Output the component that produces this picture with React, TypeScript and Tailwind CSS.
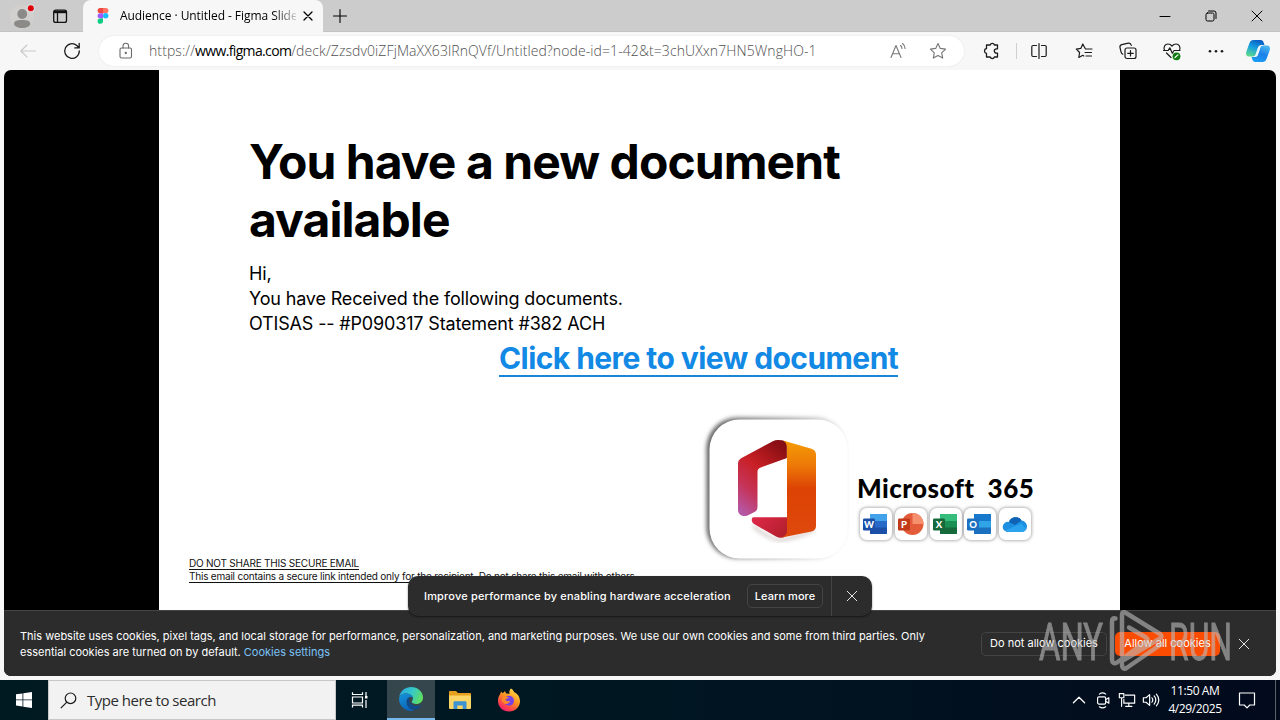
import React from "react";

type IconProps = { children: React.ReactNode; size?: number; className?: string; stroke?: number };

function Icon({ children, size = 20, className = "", stroke = 1.1 }: IconProps) {
  return (
    <svg
      width={size}
      height={size}
      viewBox="0 0 20 20"
      fill="none"
      stroke="currentColor"
      strokeWidth={stroke}
      strokeLinecap="round"
      strokeLinejoin="round"
      className={`shrink-0 ${className}`}
    >
      {children}
    </svg>
  );
}

function FigmaLogo() {
  return (
    <svg width="12" height="16" viewBox="0 0 12 16" className="shrink-0">
      <path d="M3.2 0H6v5.2H3.2a2.6 2.6 0 0 1 0-5.2Z" fill="#f0483e" />
      <path d="M6 0h2.8a2.6 2.6 0 0 1 0 5.2H6Z" fill="#ff7262" />
      <path d="M3.2 5.2H6v5.2H3.2a2.6 2.6 0 0 1 0-5.2Z" fill="#a259ff" />
      <circle cx="8.7" cy="7.8" r="2.7" fill="#1abcfe" />
      <path d="M3.2 10.4H6V13a2.7 2.7 0 1 1-2.8-2.6Z" fill="#0acf83" />
    </svg>
  );
}

function TabBar() {
  return (
    <div className="flex h-8 shrink-0 items-center border-b border-[#c2c2c2] bg-[#cccccc]">
      <div className="flex w-[83px] shrink-0 items-center">
        <svg width="28" height="28" viewBox="0 0 28 28" className="ml-2">
          <circle cx="14" cy="14.500" r="12" fill="#d2d0ce" />
          <circle cx="14.200" cy="12" r="4.900" fill="#8c8a88" />
          <path d="M6 21.800c0-3 3-3.800 8.200-3.800s8 .8 8 3.800c0 2.700-3.500 4.200-8 4.200S6 24.500 6 21.800Z" fill="#8c8a88" />
          <circle cx="22.800" cy="6.300" r="4" fill="#dedede" />
          <circle cx="22.800" cy="6.300" r="3" fill="#e0000b" />
        </svg>
        <svg width="16" height="16" viewBox="0 0 16 16" className="ml-4" fill="none" stroke="#111" strokeWidth="1.300">
          <rect x="1.700" y="2.200" width="12.800" height="12.200" rx="2" />
          <path d="M2 4h12.500" strokeWidth="2.400" />
          <path d="M5.500 4v10.300" />
        </svg>
      </div>
      <div className="flex h-8 w-[240px] shrink-0 items-center rounded-t-lg bg-[#f7f7f7] pl-[14px]">
        <FigmaLogo />
        <div className="ml-[11px] w-[176px] shrink-0 whitespace-nowrap bg-gradient-to-r from-black from-85% to-[#d0d0d0] bg-clip-text font-['Open_Sans',sans-serif] text-[12px] leading-4 tracking-[-0.06px] text-transparent">
          Audience · Untitled - Figma Slide
        </div>
        <Icon size={16} className="ml-[4px] text-black" stroke={1.600}>
          <path d="M5 5l10 10M15 5L5 15" />
        </Icon>
      </div>
      <Icon size={20} className="ml-[7px] text-black" stroke={1.100}>
        <path d="M10 3.500v13M3.500 10h13" />
      </Icon>
      <div className="ml-auto flex items-center">
        <div className="flex w-[46px] justify-center">
          <Icon stroke={1}><path d="M5 10.500h10" stroke="#000" /></Icon>
        </div>
        <div className="flex w-[46px] justify-center">
          <Icon stroke={1}>
            <rect x="5" y="7" width="8" height="8" rx="1.500" />
            <path d="M7.500 5H13a2 2 0 0 1 2 2v5.500" />
          </Icon>
        </div>
        <div className="flex w-[46px] justify-center">
          <Icon stroke={1}><path d="M5 5l10 10M15 5L5 15" /></Icon>
        </div>
      </div>
    </div>
  );
}

function Copilot() {
  return (
    <svg width="26" height="24" viewBox="0 0 26 24">
      <defs>
        <linearGradient id="cpA" x1="0.6" y1="0" x2="0.2" y2="1">
          <stop offset="0" stopColor="#0a5fc4" />
          <stop offset=".45" stopColor="#159fe0" />
          <stop offset="1" stopColor="#62dc8a" />
        </linearGradient>
        <linearGradient id="cpB" x1="0.7" y1="0" x2="0.3" y2="1">
          <stop offset="0" stopColor="#49b8f0" />
          <stop offset=".5" stopColor="#1d7fe8" />
          <stop offset="1" stopColor="#1aa0f5" />
        </linearGradient>
      </defs>
      <path d="M8.500 1h7c2 0 2.700 1 3.200 2.700L19.500 6h-3c-2 0-3 1-3.700 3l-2 6c-.6 1.800-1.400 2.500-3 2.500H4C1.500 17.500.5 15.500 1.200 13L4.500 4C5.200 2 6.500 1 8.500 1Z" fill="url(#cpA)" />
      <path d="M17.500 23h-7c-2 0-2.700-1-3.200-2.700L6.500 18h3c2 0 3-1 3.700-3l2-6c.6-1.800 1.400-2.500 3-2.500H22c2.500 0 3.500 2 2.800 4.500L21.500 20c-.7 2-2 3-4 3Z" fill="url(#cpB)" />
      <path d="M12.800 9.500c.5-1.700 1.500-2.700 3-2.700L13 15.500c-.5 1.500-1.300 2.300-3 2.300Z" fill="#e9f6ff" />
    </svg>
  );
}

function Toolbar() {
  return (
    <div className="flex h-[38px] shrink-0 items-center bg-[#f7f7f7] text-[#1b1b1b]">
      <div className="flex w-[99px] shrink-0 items-center pl-[18px]">
        <Icon className="text-[#c9c9c9]"><path d="M17.500 10H3M9 4l-6.200 6L9 16" /></Icon>
        <Icon className="ml-6" stroke={1.300}>
          <path d="M17.300 9.800A7.300 7.300 0 1 1 14.800 4.500L17 6.700M17.200 2.500v4.400h-4.400" />
        </Icon>
      </div>
      <div className="flex h-[30px] w-[865px] shrink-0 items-center rounded-full bg-white pl-[17px] shadow-[0_0_2px_rgba(0,0,0,0.1)]">
        <Icon className="text-[#6b6b6b]">
          <rect x="4" y="7" width="11.500" height="10" rx="1.500" />
          <path d="M7 7V5a2.800 2.800 0 0 1 5.600 0v2" />
          <circle cx="9.800" cy="12" r=".6" fill="currentColor" />
        </Icon>
        <div className="ml-[13px] w-[724px] whitespace-nowrap font-['Open_Sans',sans-serif] text-[14px] font-light leading-5 tracking-[0.09px] text-[#505050]">
          https://<span className="font-normal tracking-[-0.65px] text-black">www.figma.com</span>/deck/Zzsdv0iZFjMaXX63lRnQVf/Untitled?node-id=1-42&amp;t=3chUXxn7HN5WngHO-1
        </div>
        <Icon className="ml-[15px] text-[#777]">
          <path d="M3 16.500L8 4.500l5 12M4.600 12.800h6.800M12.500 4.500c1 .8 1.500 1.800 1.500 3M14.500 2.500c1.600 1.200 2.600 3 2.600 5" />
        </Icon>
        <Icon className="ml-[20px] text-[#777]">
          <path d="M10 2.500l2.300 4.900 5.300.7-3.900 3.700 1 5.300L10 14.500l-4.700 2.600 1-5.300-3.900-3.700 5.300-.7Z" />
        </Icon>
      </div>
      <div className="flex w-[52px] shrink-0 items-center">
        <Icon className="ml-[17px]" stroke={1.300}>
          <path d="M7 4h2.200a2.200 2.200 0 0 1 4.200 0H16.500V7.800h-1a2.200 2.200 0 0 0 0 4.400h1V16h-3.100a2.200 2.200 0 0 1-4.200 0H5.500v-3.600a2.500 2.500 0 0 1 0-4.900V4Z" />
        </Icon>
      </div>
      <div className="flex flex-1 items-center">
        <div className="h-4 w-px bg-[#cfcfcf]" />
        <div className="flex w-[44px] justify-center">
          <Icon stroke={1.200}><path d="M10 2.500v15M7.500 4.500H4A1.200 1.200 0 0 0 2.800 5.700v8.600A1.200 1.200 0 0 0 4 15.500h3.500M12.500 4.500H16a1.200 1.200 0 0 1 1.200 1.200v8.600a1.200 1.200 0 0 1-1.200 1.200h-3.500" /></Icon>
        </div>
        <div className="flex w-[45px] justify-center">
          <Icon stroke={1.200}><path d="M11.200 7.500L8.800 3 6.800 7.400l-4.500.7 3.300 3.400-.8 5 4-2.200 1 .6M11.500 8h6.500M11 11.500h6.500M12 15h5.500" /></Icon>
        </div>
        <div className="flex w-[44px] justify-center">
          <Icon stroke={1.200}>
            <rect x="7" y="7" width="11" height="10.500" rx="2" />
            <path d="M12.500 9.500v5.500M9.700 12.300h5.600M4.800 13.200C3.500 12.500 3.300 12 3 10.800L2 6.500C1.700 5 2.300 4 3.800 3.600l6.500-1.400c1.500-.3 2.600.4 3 2.300" />
          </Icon>
        </div>
        <div className="flex w-[44px] justify-center">
          <Icon stroke={1.200}>
            <path d="M2.500 9.500C1 6 3 3 6 3c1.800 0 3 .8 4 2 1-1.200 2.200-2 4-2 3 0 5 3 3.500 6.500M1.500 9.500h4.700l1.600-2.700 2.500 5.500L12 9.500h6M4.500 12l4.500 4.500" />
            <circle cx="14.500" cy="15.300" r="3.900" fill="#117a11" stroke="none" />
            <path d="M13 16.500l3-2.600" stroke="#fff" />
          </Icon>
        </div>
        <div className="flex w-[44px] justify-center">
          <Icon><g fill="#1b1b1b" stroke="none"><circle cx="4" cy="10.300" r="1.300" /><circle cx="10" cy="10.300" r="1.300" /><circle cx="16" cy="10.300" r="1.300" /></g></Icon>
        </div>
        <div className="flex w-[39px] justify-center"><Copilot /></div>
      </div>
    </div>
  );
}

function OfficeTile() {
  return (
    <svg width="160" height="160" viewBox="700 410 160 160" className="shrink-0">
      <defs>
        <filter id="tileShadow" x="-15%" y="-15%" width="130%" height="130%"><feGaussianBlur stdDeviation="2.200" /></filter>
        <linearGradient id="tileEdge" x1="0" y1="0.200" x2="1" y2="0.300">
          <stop offset="0" stopColor="#5c5c5c" />
          <stop offset=".55" stopColor="#a0a0a0" />
          <stop offset="1" stopColor="#ececec" />
        </linearGradient>
        <linearGradient id="oLeft" x1="0.700" y1="0" x2="0.150" y2="1">
          <stop offset="0" stopColor="#8c0f12" />
          <stop offset=".4" stopColor="#c92026" />
          <stop offset=".7" stopColor="#c53357" />
          <stop offset="1" stopColor="#b558a8" />
        </linearGradient>
        <linearGradient id="oTop" x1="0" y1="1" x2="1" y2="0">
          <stop offset="0" stopColor="#c21d22" stopOpacity="0" />
          <stop offset="1" stopColor="#750b12" />
        </linearGradient>
        <linearGradient id="oRight" x1="0" y1="0" x2="0" y2="1">
          <stop offset="0" stopColor="#f49b04" />
          <stop offset=".25" stopColor="#ee7a08" />
          <stop offset=".5" stopColor="#dc4204" />
          <stop offset="1" stopColor="#df4a0c" />
        </linearGradient>
        <linearGradient id="oBottom" x1="0" y1="0" x2="1" y2="0.600">
          <stop offset="0" stopColor="#e0284a" />
          <stop offset="1" stopColor="#b5202d" />
        </linearGradient>
      </defs>
      <rect x="706.500" y="417.500" width="140" height="141" rx="31" fill="url(#tileEdge)" filter="url(#tileShadow)" />
      <rect x="709.500" y="419.500" width="138" height="139" rx="30" fill="#fff" />
      <path d="M753 526c12 10 22 14 26 14s24-4 35-10" stroke="#c9c0bd" strokeWidth="2.500" fill="none" filter="url(#tileShadow)" />
      <path d="M738 464c0-3 1-4.500 3.500-6L773 441.200c4-2 9-1.600 13.800 1V458l-26 9.500c-2.500 1-3.300 2.200-3.300 4.500v34.500c0 3-1 4.500-3.500 5.800l-6.500 3.200c-4 1.800-9.500-.5-9.500-5.500Z" fill="url(#oLeft)" />
      <path d="M757 450l16-8.800c4-2 9-1.600 13.800 1V458l-17 6.200-8-3Z" fill="url(#oTop)" opacity=".6" />
      <path d="M753 517.300h34v18c-4 3.200-7 3-11 1.200l-21-12c-4-2.500-4-5.500-2-7.200Z" fill="url(#oBottom)" />
      <path d="M783 440.500l28.500 8.200c3 1 4.500 3 4.500 6V526c0 3-1.500 4.700-4.500 5.600L779.500 538c4-1 7.500-3 7.500-7v-83c0-4-1.500-6-4-7.500Z" fill="url(#oRight)" />
    </svg>
  );
}

function LetterGlyph({ letter, dark, light, mid, round }: { letter: string; dark: string; light: string; mid: string; round?: boolean }) {
  return (
    <svg width="26" height="24" viewBox="0 0 26 24">
      {round ? (
        <g>
          <circle cx="14.500" cy="12" r="11" fill={mid} />
          <path d="M14.500 1a11 11 0 0 1 11 11h-11Z" fill={light} />
        </g>
      ) : (
        <g>
          <rect x="7" y="2" width="17" height="20" rx="1.300" fill={mid} />
          <path d="M7 2h17v7H7Z" fill={light} />
          <path d="M7 15.500h17V21a1 1 0 0 1-1 1H7Z" fill={dark} />
        </g>
      )}
      <rect x="0" y="6.500" width="12" height="12" rx="1.200" fill={dark} />
      <text x="6" y="16" textAnchor="middle" fontFamily="Lato, sans-serif" fontWeight="900" fontSize="9.500" fill="#fff">{letter}</text>
    </svg>
  );
}

function AppTile({ children }: { children: React.ReactNode }) {
  return (
    <div className="flex size-[32px] items-center justify-center rounded-[7px] bg-white shadow-[0_0_3px_1px_rgba(110,110,110,0.5)]">
      {children}
    </div>
  );
}

function Slide() {
  return (
    <div className="flex h-[540px] w-[961px] shrink-0 flex-col bg-white font-['Inter',sans-serif] text-black">
      <h1 className="ml-[90px] mt-[63px] w-[700px] text-[48px] font-bold leading-[58px] tracking-[-0.93px]">
        You have a new document
        <br />
        available
      </h1>
      <div className="ml-[90px] mt-[12px] text-[18px] leading-[25px] tracking-[-0.16px]">
        <p>Hi,</p>
        <p>You have Received the following documents.</p>
        <p>OTISAS -- #P090317 Statement #382 ACH</p>
      </div>
      <div className="ml-[340px] mt-[6px] h-[35px] w-[400px]">
        <span className="inline-block whitespace-nowrap border-b-2 border-[#1a86d8] text-[30px] font-bold leading-[33px] tracking-[-0.57px] text-[#1289e4]">
          Click here to view document
        </span>
      </div>
      <div className="ml-[541px] mt-[33px] flex h-[143px]">
        <OfficeTile />
        <div className="-ml-[3px] mt-[64px]">
          <div className="flex gap-[13px] whitespace-nowrap font-['Lato',sans-serif] text-[26px] font-black leading-[28px]">
            <span className="tracking-[0.42px]">Microsoft</span>
            <span className="tracking-[0.5px]">365</span>
          </div>
          <div className="ml-[3px] mt-[6px] flex gap-[2.800px]">
            <AppTile><LetterGlyph letter="W" dark="#1c4fa8" mid="#2768c8" light="#42a2ea" /></AppTile>
            <AppTile><LetterGlyph letter="P" dark="#c13b1b" mid="#e35b38" light="#f58f6d" round /></AppTile>
            <AppTile><LetterGlyph letter="X" dark="#15693a" mid="#1c9054" light="#35bd7c" /></AppTile>
            <AppTile><LetterGlyph letter="O" dark="#1c70c0" mid="#2fa4e6" light="#1878cc" /></AppTile>
            <AppTile>
              <svg width="26" height="18" viewBox="0 0 26 18">
                <path d="M7 7a7 7 0 0 1 12.500-1.500A6 6 0 0 1 25 11.500 5.500 5.500 0 0 1 20 17H6A5.200 5.200 0 0 1 .7 12 5.200 5.200 0 0 1 7 7Z" fill="#1c8fe0" />
                <path d="M7 7a7 7 0 0 1 12.500-1.500L13 10Z" fill="#0f62b4" />
                <path d="M3 15.500L19 8.500l5.500 5.500A5.500 5.500 0 0 1 20 17H6a6 6 0 0 1-3-1.500Z" fill="#2ba3ee" />
              </svg>
            </AppTile>
          </div>
        </div>
      </div>
      <div className="ml-[30px] mt-[4px] whitespace-nowrap text-[10px] leading-[13px] tracking-[-0.21px] text-[#111] underline underline-offset-2">
        <p>DO NOT SHARE THIS SECURE EMAIL</p>
        <p>This email contains a secure link intended only for the recipient. Do not share this email with others.</p>
      </div>
    </div>
  );
}

function Toast() {
  return (
    <div className="absolute left-[404px] top-[506px] z-10 flex h-10 w-[464px] items-center rounded-[10px] bg-[#2c2c2c] font-['Inter',sans-serif] text-[11px] text-white shadow-[0_1px_2px_rgba(0,0,0,0.5)]">
      <span className="ml-4 w-[307px] whitespace-nowrap font-medium tracking-[0.170px]">Improve performance by enabling hardware acceleration</span>
      <button className="ml-4 h-6 w-[76px] whitespace-nowrap rounded-[5px] border border-[#444] font-medium tracking-[0.05px]">Learn more</button>
      <div className="ml-2 h-full w-px bg-[#444]" />
      <div className="flex flex-1 justify-center">
        <Icon size={16}><path d="M4 4l12 12M16 4L4 16" /></Icon>
      </div>
    </div>
  );
}

function CookieBar() {
  return (
    <div className="absolute bottom-0 left-0 flex h-[66px] w-full items-center rounded-b-md border-t border-[#444] bg-[#2c2c2c] font-['Inter',sans-serif] text-[11px] text-white">
      <p className="ml-4 w-[930px] whitespace-nowrap leading-4">
        This website uses cookies, pixel tags, and local storage for performance, personalization, and marketing purposes. We use our own cookies and some from third parties. Only
        <br />
        essential cookies are turned on by default. <span className="text-[#7cc4f8]">Cookies settings</span>
      </p>
      <button className="ml-[31px] h-6 w-[126px] whitespace-nowrap rounded-[5px] border border-[#444]">Do not allow cookies</button>
      <button className="ml-2 h-6 w-[105px] whitespace-nowrap rounded-[5px] bg-[#fc4c02]">Allow all cookies</button>
      <Icon size={16} className="ml-4"><path d="M4 4l12 12M16 4L4 16" /></Icon>
    </div>
  );
}

function Watermark() {
  return (
    <svg className="pointer-events-none absolute left-[1026px] top-[535px] z-20 opacity-60" width="216" height="72" viewBox="1030 605 216 72">
      <g fill="#bdbdbd" stroke="#bdbdbd" strokeWidth="1" fontFamily="Roboto, sans-serif" fontSize="52">
        <text x="1039" y="660" textLength="64" lengthAdjust="spacingAndGlyphs">ANY</text>
        <text x="1169" y="660" textLength="63" lengthAdjust="spacingAndGlyphs">RUN</text>
      </g>
      <g fill="none" stroke="#bdbdbd" strokeWidth="4.500" strokeLinejoin="round" strokeLinecap="round">
        <path d="M1122 655V615c0-3 2-3.500 4-2l34 21c2 1.500 2 3 0 4.500L1122 661" />
        <path d="M1115.500 618.500c-2-.5-3.500 0-3.500 3v38c0 3.500 2 4.500 5 3l29-21c2-1.500 2-2.500 0-4l-17-10" />
        <path d="M1122 664c0 4.500 2 5.500 4.500 4l35-24" />
      </g>
    </svg>
  );
}

function EdgeLogo() {
  return (
    <svg width="26" height="26" viewBox="0 0 26 26">
      <defs>
        <linearGradient id="edTop" x1="0" y1="0.300" x2="1" y2="0.600">
          <stop offset="0" stopColor="#2aa9e0" />
          <stop offset=".5" stopColor="#35c8c8" />
          <stop offset="1" stopColor="#62e05a" />
        </linearGradient>
        <linearGradient id="edLow" x1="0" y1="0" x2="0.500" y2="1">
          <stop offset="0" stopColor="#1596dc" />
          <stop offset="1" stopColor="#0c62b8" />
        </linearGradient>
      </defs>
      <path d="M1.200 11C2.500 4.500 7.500 1 13 1c7 0 12 5 12 10.500 0 4-3 6.500-6.700 6.500-3 0-4.600-1.200-4.600-2.200 0-.8 1.200-1 1.200-3.300C14.900 9 11 7.500 7.800 7.500c-3 0-5.300 1.500-6.600 3.500Z" fill="url(#edTop)" />
      <path d="M1.100 11.500C2.500 9 5 7.600 8 7.600c3 0 6.500 1.500 6.900 4.400-.5-.8-1.700-1.300-3-1C8 12 7.500 18 11 21.500c1.200 1.300 3 2.600 5 3C8 27 .2 20 1.100 11.500Z" fill="url(#edLow)" />
      <path d="M11.500 11.300c-4 1.700-3.700 7.700.5 11 3.500 2.500 8 1.700 11.300-2.500.3-.4-.1-.8-.5-.6-3.500 1.700-8.500 1-10.700-2.200-1.200-1.800-1.300-4-.6-5.700Z" fill="#114a8b" />
    </svg>
  );
}

function Taskbar() {
  return (
    <div className="flex h-10 shrink-0 bg-gradient-to-r from-[#001a22] via-[#001722] via-50% to-[#020a1c] font-['Open_Sans',sans-serif] text-white">
      <div className="flex w-12 shrink-0 items-center justify-center">
        <svg width="16" height="16" viewBox="0 0 16 16" fill="#fff">
          <path d="M0 2.300L6.500 1.400v6.100H0ZM7.300 1.300L16 0v7.500H7.300ZM0 8.300h6.500v6.200L0 13.600ZM7.300 8.300H16V16l-8.700-1.300Z" />
        </svg>
      </div>
      <div className="flex w-[288px] shrink-0 items-center border border-[#c8c8c8] bg-[#f2f2f2] pl-[11px]">
        <svg width="17" height="17" viewBox="0 0 17 17" fill="none" stroke="#1a1a1a" strokeWidth="1.200">
          <circle cx="10.500" cy="6.300" r="5.300" />
          <path d="M6.800 10.200L.8 16.200" />
        </svg>
        <span className="ml-[10px] text-[15px] leading-5 tracking-[-0.48px] text-[#2d2d2d]">Type here to search</span>
      </div>
      <div className="flex w-[51px] shrink-0 items-center justify-center">
        <svg width="18" height="18" viewBox="0 0 18 18" fill="none" stroke="#fff" strokeWidth="1.200" className="-ml-1">
          <path d="M1.500 1.200v2.300h10V1.200M1.500 16.500v-2.300h10v2.300M1.500 6h10v6h-10ZM15 1v4M15 9v8" />
          <rect x="14" y="5" width="2.500" height="2.500" fill="#fff" stroke="none" />
        </svg>
      </div>
      <div className="flex w-12 shrink-0 items-center justify-center border-b-2 border-[#76b9ed] bg-[#36464d]">
        <EdgeLogo />
      </div>
      <div className="flex w-[49px] shrink-0 items-center justify-center">
        <svg width="22" height="18" viewBox="0 0 22 18">
          <path d="M0 1c0-.6.400-1 1-1h6l2 2h12c.6 0 1 .4 1 1v4H0Z" fill="#e5a01d" />
          <path d="M0 4.500h22V17a1 1 0 0 1-1 1H1a1 1 0 0 1-1-1Z" fill="#fbd666" />
          <path d="M4.500 18v-6.500c0-.8.6-1.300 1.300-1.300h10.400c.8 0 1.300.5 1.300 1.300V18h-3.800v-3.500H8.300V18Z" fill="#3f93d2" />
        </svg>
      </div>
      <div className="flex w-[50px] shrink-0 items-center justify-center">
        <svg width="24" height="24" viewBox="0 0 24 24">
          <defs>
            <linearGradient id="fxA" x1="0.800" y1="0" x2="0.200" y2="1">
              <stop offset="0" stopColor="#ffe14a" />
              <stop offset=".45" stopColor="#ff9020" />
              <stop offset=".8" stopColor="#ff3b52" />
              <stop offset="1" stopColor="#e8187a" />
            </linearGradient>
          </defs>
          <path d="M14 .5c1.500 1 2.500 2 3 3.500 3.500 1.500 6 5 6 9.300C23 19 18.300 23.500 12 23.500S1 19 1 12.800c0-3 1-5.300 2.300-7L4 3.500l1.800 1.800L8 3l1 2.500c1.500-.2 2.500 0 3.500.5C12 3.500 12.500 2 14 .5Z" fill="url(#fxA)" />
          <circle cx="12" cy="12.800" r="5" fill="#7542e5" />
          <path d="M5 10c2-2 5-2 7 0-2 .2-3 1-3.500 2 1.500 1.500 3.500 1.500 4.500.5 0 3-4 4.500-6.500 2.500C5 13.500 4.600 12 5 10Z" fill="#ff8a2a" />
        </svg>
      </div>
      <div className="ml-auto flex items-center">
        <div className="flex w-6 justify-center"><Icon size={16} stroke={1.600}><path d="M3 13.500l7-7 7 7" /></Icon></div>
        <div className="flex w-6 justify-center">
          <Icon size={18} stroke={1.300}>
            <rect x="4" y="6.500" width="9" height="8" rx="1.500" />
            <path d="M13 9.500l3.500-2v6l-3.500-2M6 3.500c2-1.500 5-1.500 7 0M6 17.500c2 1.500 5 1.500 7 0" />
          </Icon>
        </div>
        <div className="flex w-6 justify-center">
          <Icon size={18} stroke={1.300}>
            <path d="M8 4.500h10.500v9H6.500V9.500M12 13.500v3.500M8.500 17h7M1.500 3h5v4.500h-5ZM4 7.500V17" />
          </Icon>
        </div>
        <div className="flex w-6 justify-center">
          <Icon size={18} stroke={1.300}>
            <path d="M1.500 7.500h3L8.500 4v12l-4-3.500h-3ZM11 7.500c1.200 1.500 1.200 3.500 0 5M13.500 5.500c2.200 2.700 2.200 6.300 0 9M16 3.500c3.300 4 3.300 9 0 13" />
          </Icon>
        </div>
        <div className="w-16 whitespace-nowrap text-center text-[12px] leading-[18px] tracking-[-0.4px]">
          <div>11:50 AM</div>
          <div>4/29/2025</div>
        </div>
        <div className="flex w-10 justify-center">
          <Icon size={20} stroke={1.200}><path d="M2.500 3h15v12h-4.700L10 17.800 7.200 15H2.500Z" /></Icon>
        </div>
        <div className="ml-2 h-10 w-px bg-[#59636c]" />
        <div className="w-1" />
      </div>
    </div>
  );
}

export default function App() {
  return (
    <div className="flex h-[720px] w-[1280px] flex-col overflow-hidden bg-[#f7f7f7]">
      <TabBar />
      <Toolbar />
      <div className="relative mx-1 mb-1 flex h-[606px] shrink-0 overflow-hidden rounded-[7px] bg-black pl-[155px]">
        <Slide />
        <Toast />
        <CookieBar />
        <Watermark />
      </div>
      <Taskbar />
    </div>
  );
}
